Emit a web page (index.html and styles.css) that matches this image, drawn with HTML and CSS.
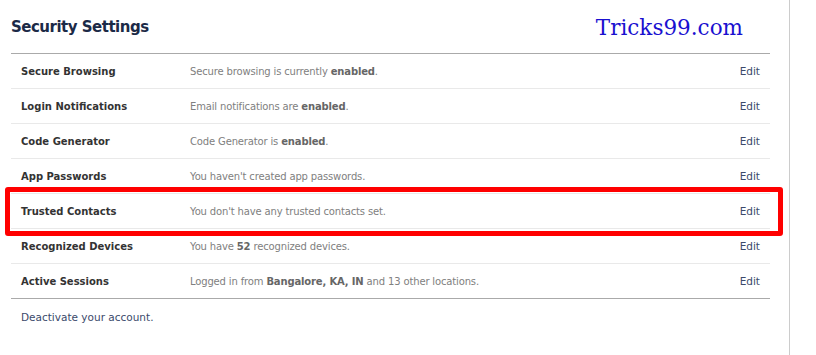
FILE: index.html
```html
<!DOCTYPE html>
<html lang="en">
<head>
    <meta charset="UTF-8">
    <title>Security Settings</title>
    <link rel="stylesheet" href="styles.css">
</head>
<body>
    <div class="page">
        <div class="header">
            <h1>Security Settings</h1>
            <span class="brand">Tricks99.com</span>
        </div>

        <div class="settings">
            <div class="row">
                <span class="label">Secure Browsing</span>
                <span class="desc">Secure browsing is currently <b>enabled</b>.</span>
                <a class="edit" href="#">Edit</a>
            </div>
            <div class="row">
                <span class="label">Login Notifications</span>
                <span class="desc">Email notifications are <b>enabled</b>.</span>
                <a class="edit" href="#">Edit</a>
            </div>
            <div class="row">
                <span class="label">Code Generator</span>
                <span class="desc">Code Generator is <b>enabled</b>.</span>
                <a class="edit" href="#">Edit</a>
            </div>
            <div class="row">
                <span class="label">App Passwords</span>
                <span class="desc">You haven't created app passwords.</span>
                <a class="edit" href="#">Edit</a>
            </div>
            <div class="row">
                <span class="label">Trusted Contacts</span>
                <span class="desc">You don't have any trusted contacts set.</span>
                <a class="edit" href="#">Edit</a>
            </div>
            <div class="row">
                <span class="label">Recognized Devices</span>
                <span class="desc">You have <b>52</b> recognized devices.</span>
                <a class="edit" href="#">Edit</a>
            </div>
            <div class="row">
                <span class="label">Active Sessions</span>
                <span class="desc">Logged in from <b>Bangalore, KA, IN</b> and 13 other locations.</span>
                <a class="edit" href="#">Edit</a>
            </div>
        </div>

        <a class="deactivate" href="#">Deactivate your account.</a>
    </div>

    <!-- annotation over the Trusted Contacts row -->
    <div class="highlight"></div>
</body>
</html>
```

FILE: styles.css
```css
body {
    margin: 0;
    font-family: "DejaVu Sans", Tahoma, sans-serif;
    font-size: 10px;
    background: #fff;
}
.page {
    width: 790px;
    height: 355px;
    border-right: 1px solid #ccc;
    box-sizing: border-box;
    padding-left: 11px;
}
.header {
    width: 759px;
    height: 53px;
    display: flex;
    align-items: center;
    justify-content: space-between;
}
h1 {
    margin: 0;
    font-size: 15px;
    font-weight: bold;
    letter-spacing: -0.5px;
    color: #1c2a47;
}
.brand {
    font-family: "DejaVu Serif", "Liberation Serif", serif;
    font-size: 21.5px;
    color: #1a10d0;
    margin-right: 27px;
    padding-top: 2px;
}
.settings {
    width: 759px;
    border-top: 1px solid #aaa;
    border-bottom: 1px solid #aaa;
}
.row {
    height: 34px;
    display: flex;
    align-items: center;
    padding: 0 10px;
    border-bottom: 1px solid #e9e9e9;
}
.row:last-child {
    border-bottom: none;
}
.label {
    width: 169px;
    font-weight: bold;
    color: #333;
}
.desc {
    flex: 1;
    letter-spacing: -0.15px;
    color: #808080;
}
.desc b {
    color: #666;
}
.edit {
    font-size: 10.5px;
    color: #3b4a6b;
    text-decoration: none;
}
.deactivate {
    display: block;
    margin: 12px 0 0 10px;
    font-size: 10.5px;
    color: #3b4a6b;
    text-decoration: none;
}
.highlight {
    position: absolute;
    left: 5px;
    top: 187px;
    width: 778px;
    height: 49px;
    box-sizing: border-box;
    border: 5px solid #f00;
    border-radius: 3px;
}
```
